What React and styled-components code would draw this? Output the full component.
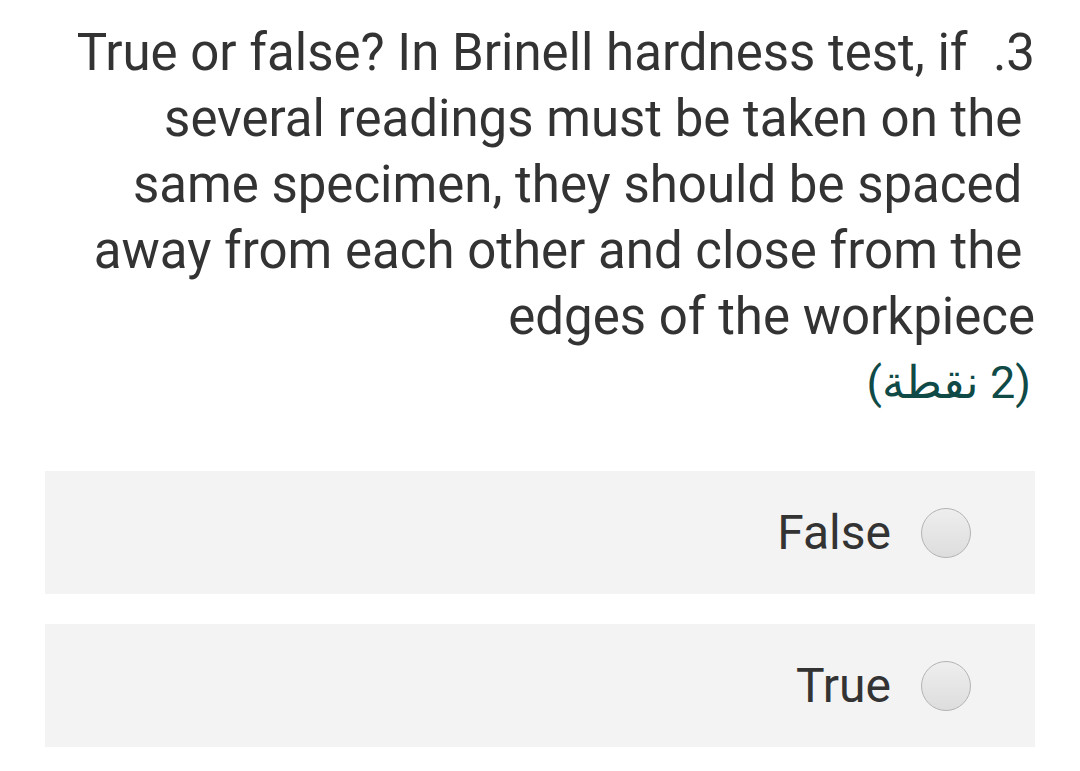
import styled, { createGlobalStyle } from "styled-components";

const GlobalStyle = createGlobalStyle`
  html, body {
    margin: 0;
    padding: 0;
    background: #ffffff;
  }
  body {
    font-family: Roboto, "Noto Sans", Arial, sans-serif;
  }
`;

const Page = styled.div`
  direction: rtl;
  width: 1080px;
  padding: 20px 45px 24px 45px;
  box-sizing: border-box;
`;

const Question = styled.div`
  margin-left: 20px;
  font-size: 51px;
  line-height: 66px;
  color: #333333;
  text-align: right;
`;

const Body = styled.span`
  unicode-bidi: embed;
  white-space: break-spaces;
`;

const Points = styled.div`
  color: #0f4a47;
  font-size: 45px;
  line-height: 66px;
  padding-right: 4px;
`;

const Options = styled.div`
  display: flex;
  flex-direction: column;
  gap: 30px;
  margin-top: 55px;
`;

const Option = styled.label`
  display: flex;
  align-items: center;
  gap: 30px;
  height: 123px;
  padding-right: 64px;
  background: #f3f3f3;
  font-size: 48px;
  color: #333333;
`;

const Radio = styled.span`
  width: 48px;
  height: 48px;
  border-radius: 50%;
  border: 1.5px solid #b3b3b3;
  background: linear-gradient(#eeeeee, #dddddd);
  flex-shrink: 0;
`;

const options = ["False", "True"];

const App = () => {
  return (
    <Page>
      <GlobalStyle />
      <Question>
        3.{" "}
        <Body dir="ltr">
          True or false? In Brinell hardness test, if several readings must be taken on the same specimen, they should be spaced away from each other and close from the edges of the workpiece
        </Body>
        <Points>(2 نقطة)</Points>
      </Question>
      <Options>
        {options.map((o) => (
          <Option key={o}>
            <Radio />
            <span>{o}</span>
          </Option>
        ))}
      </Options>
    </Page>
  );
};

export default App;
